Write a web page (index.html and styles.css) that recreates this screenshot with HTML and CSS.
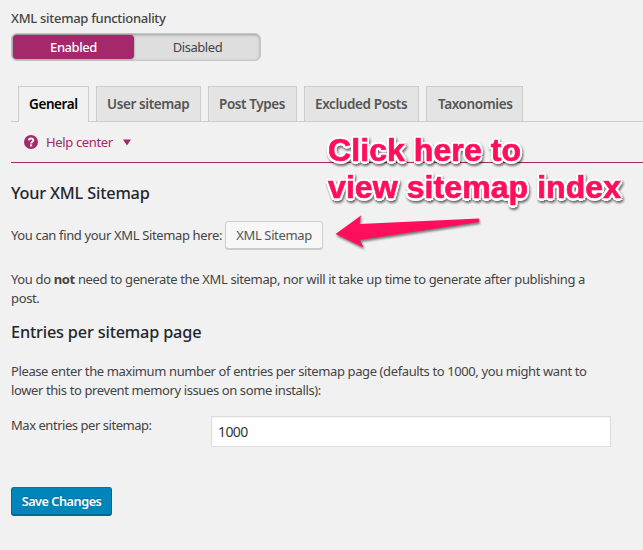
FILE: index.html
```html
<!DOCTYPE html>
<html lang="en">
<head>
<meta charset="utf-8">
<title>XML Sitemaps</title>
<link rel="stylesheet" href="styles.css">
</head>
<body>
<main class="page">
  <div class="switch-label"><span>XML sitemap functionality</span></div>
  <div class="switch">
    <div class="switch-option active"><span>Enabled</span></div>
    <div class="switch-option"><span>Disabled</span></div>
  </div>

  <nav class="tabs">
    <a class="tab active">General</a>
    <a class="tab user">User sitemap</a>
    <a class="tab types">Post Types</a>
    <a class="tab excluded">Excluded Posts</a>
    <a class="tab taxonomies">Taxonomies</a>
  </nav>

  <div class="help">
    <svg class="help-icon" width="14" height="14" viewBox="0 0 14 14"><circle cx="7" cy="7" r="7" fill="#a4286a"/><path d="M4.8 5.4C4.9 2.8 9.3 2.8 9.3 5.2C9.3 6.8 7.1 6.7 7.1 8.5" fill="none" stroke="#f1f1f1" stroke-width="2"/><rect x="6" y="9.4" width="2.2" height="2" fill="#f1f1f1"/></svg>
    <span class="help-text">Help center</span>
    <svg class="help-arrow" width="8" height="7" viewBox="0 0 8 7"><path d="M0 0.5h8L4 6.5z" fill="#a4286a"/></svg>
  </div>

  <h2 class="first-title">Your XML Sitemap</h2>
  <div class="find-row"><span class="find-text">You can find your XML Sitemap here:</span><a class="button">XML Sitemap</a></div>
  <p class="note">You do <b>not</b> need to generate the XML sitemap, nor will it take up time to generate after publishing a<br>post.</p>

  <h2 class="second-title">Entries per sitemap page</h2>
  <p class="entries">Please enter the maximum number of entries per sitemap page (defaults to 1000, you might want to<br>lower this to prevent memory issues on some installs):</p>

  <div class="field">
    <label class="field-label">Max entries per sitemap:</label>
    <div class="input">1000</div>
  </div>

  <div class="save">Save Changes</div>
</main>

<div class="callout">Click here to<br>view sitemap index</div>
<svg class="arrow" width="160" height="50" viewBox="330 205 160 50"><path d="M335.500 234L361 215.500L359.500 224L479 218.500V222L360 240L363.500 247.500Z" fill="#ff0f5b"/></svg>
</body>
</html>
```
FILE: styles.css
```css
* { box-sizing: border-box; }
body {
  margin: 0;
  background: #f1f1f1;
  color: #444;
  font: 13px/19px "Noto Sans", "Open Sans", sans-serif;
  letter-spacing: -0.36px;
  white-space: nowrap;
}
.page { height: 550px; padding: 9px 0 0 11px; overflow: hidden; }
.switch-label { height: 24px; font-weight: 500; letter-spacing: -0.29px; }
.switch {
  display: flex;
  width: 250px;
  height: 28px;
  padding: 2px 2px 2px 1px;
  border: 1px solid #c6c6c6;
  border-radius: 6px;
  background: #dedede;
  box-shadow: inset 0 1px 3px rgba(0,0,0,.3);
}
.switch-option { flex: 1; padding-left: 3px; text-align: center; line-height: 23px; letter-spacing: -0.45px; }
.switch-option.active {
  margin: -1px 0;
  padding: 0;
  border-radius: 4px;
  background: #a4286a;
  color: #fff;
  font-weight: 500;
  line-height: 25px;
  box-shadow: 0 0 2px rgba(0,0,0,.5);
}
.tabs {
  display: flex;
  gap: 7px;
  height: 36px;
  margin-top: 25px;
  padding-left: 7px;
  border-bottom: 1px solid #ccc;
}
.tab {
  height: 35px;
  padding: 0 0 0 10px;
  border: 1px solid #ccc;
  border-bottom: 0;
  background: #e4e4e4;
  color: #555;
  font-size: 13.5px;
  font-weight: 600;
  line-height: 35px;
  letter-spacing: -0.4px;
}
.tab.active { width: 71px; height: 36px; background: #f1f1f1; color: #000; }
.tab.user { width: 105px; }
.tab.types { width: 89px; }
.tab.excluded { width: 115px; }
.tab.taxonomies { width: 97px; padding-left: 11px; }
.help {
  display: flex;
  align-items: center;
  height: 41px;
  padding-left: 13px;
  border-bottom: 1px solid #a4286a;
  color: #a4286a;
}
.help-text { width: 67px; margin: 0 10px 0 8px; }
h2 { margin: 0; color: #23282d; font-size: 16.3px; font-weight: 500; line-height: 24px; letter-spacing: -0.18px; }
.first-title { margin-top: 18px; }
.find-row { display: flex; align-items: flex-start; height: 29px; margin-top: 16px; }
.find-text { width: 214px; line-height: 29px; }
.button {
  width: 98px;
  height: 28px;
  border: 1px solid #ccc;
  border-radius: 3px;
  background: #f7f7f7;
  box-shadow: 0 1px 0 #ccc;
  color: #555;
  line-height: 26px;
  text-align: center;
}
p { margin: 0; }
.note { margin-top: 20px; height: 39px; }
.second-title { margin-top: 11px; }
.entries { margin-top: 18px; height: 38px; letter-spacing: -0.39px; }
.field { display: flex; margin-top: 16px; }
.field-label { width: 200px; letter-spacing: -0.46px; }
.input {
  width: 400px;
  height: 31px;
  padding-left: 6px;
  border: 1px solid #ddd;
  background: #fff;
  box-shadow: inset 0 1px 2px rgba(0,0,0,.07);
  color: #32373c;
  font-size: 14px;
  line-height: 30px;
  letter-spacing: -0.6px;
}
.save {
  width: 101px;
  height: 29px;
  margin-top: 40px;
  border: 1px solid #006799;
  border-top-color: #0073aa;
  border-bottom-width: 2px;
  border-radius: 3px;
  background: #0085ba;
  color: #fff;
  font-size: 12.7px;
  font-weight: 600;
  line-height: 27px;
  letter-spacing: -0.47px;
  text-align: center;
  text-shadow: 0 -1px 1px #006799;
}
.callout {
  position: absolute;
  left: 328px;
  top: 132px;
  color: #ff0f5b;
  font: bold 32px/37px "Liberation Sans", Arial, sans-serif;
  letter-spacing: 0.08px;
  -webkit-text-stroke: 0.7px #ff0f5b;
  text-shadow:
    2.5px 0 #fff, -2.5px 0 #fff, 0 2.5px #fff, 0 -2.5px #fff,
    2px 2px #fff, -2px 2px #fff, 2px -2px #fff, -2px -2px #fff;
  filter: drop-shadow(1px 2px 1px rgba(0,0,0,.55));
}
.arrow { position: absolute; left: 330px; top: 205px; filter: drop-shadow(1px 2px 1px rgba(0,0,0,.5)); }
```
